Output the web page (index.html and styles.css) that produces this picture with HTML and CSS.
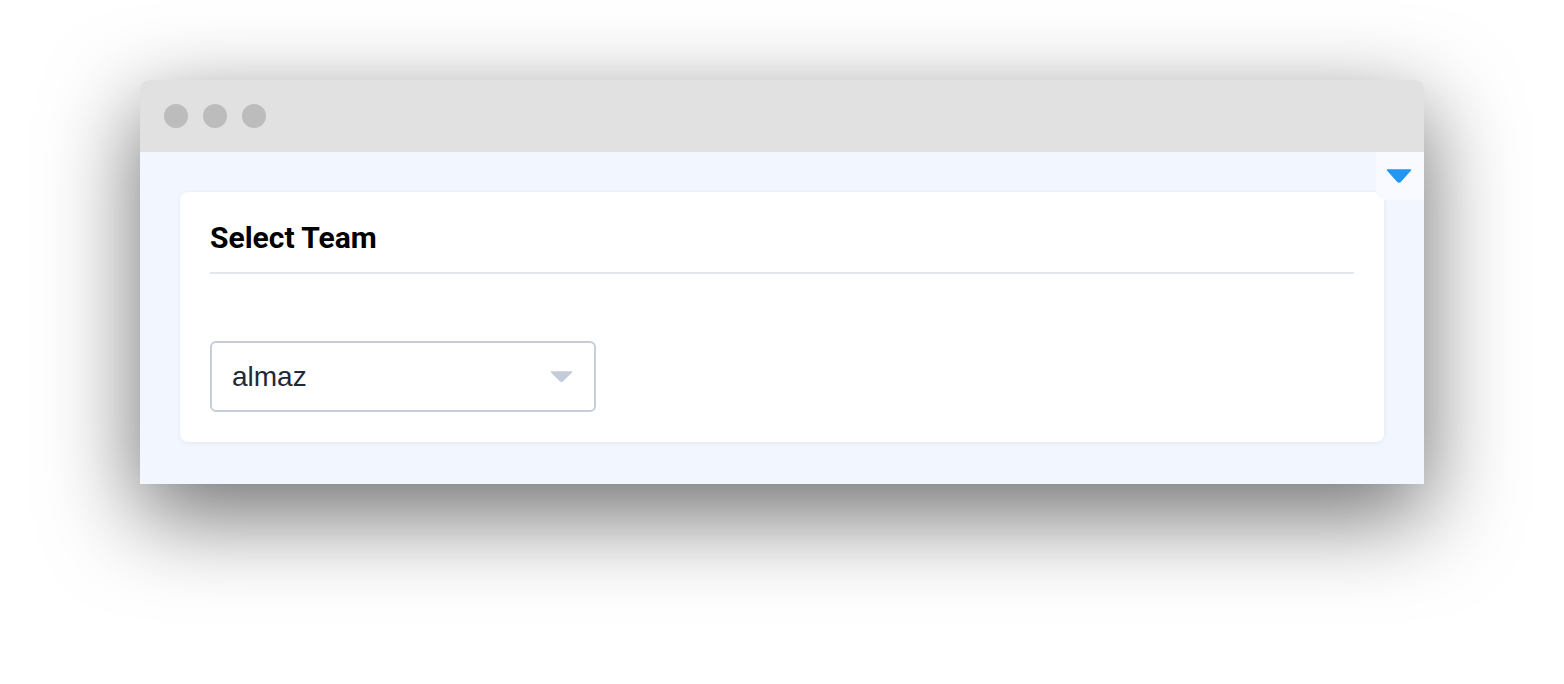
FILE: index.html
```html
<!DOCTYPE html>
<html lang="en">
<head>
    <meta charset="UTF-8">
    <meta name="viewport" content="width=device-width, initial-scale=1.0">
    <title>Select Team</title>
    <link rel="stylesheet" href="styles.css">
</head>
<body>
    <div class="window">
        <div class="titlebar">
            <span class="dot"></span>
            <span class="dot"></span>
            <span class="dot"></span>
        </div>
        <div class="content">
            <div class="corner-toggle">
                <svg width="26" height="14" viewBox="0 0 26 14">
                    <path d="M1.5 1 L24.5 1 L14.2 12.4 Q13 13.6 11.8 12.4 Z" fill="#2196f3" stroke="#2196f3" stroke-width="1.5" stroke-linejoin="round"/>
                </svg>
            </div>
            <div class="card">
                <h2>Select Team</h2>
                <div class="select-box">
                    <span class="select-value">almaz</span>
                    <svg class="select-arrow" width="23" height="11" viewBox="0 0 23 11">
                        <path d="M1.5 1 L21.5 1 L12.4 10 Q11.5 10.8 10.6 10 Z" fill="#c3ccd8" stroke="#c3ccd8" stroke-width="1.5" stroke-linejoin="round"/>
                    </svg>
                </div>
            </div>
        </div>
    </div>
</body>
</html>
```

FILE: styles.css
```css
html {
    background-color: #ffffff;
}

body {
    margin: 0;
    padding: 80px 140px 0;
    min-height: 684px;
    box-sizing: border-box;
    background-color: #ffffff;
    font-family: Roboto, "Liberation Sans", sans-serif;
}

.window {
    width: 1284px;
    border-radius: 8px 8px 0 0;
    box-shadow: 0 30px 90px 2px rgba(0, 0, 0, 0.56);
}

.titlebar {
    height: 72px;
    background-color: #e1e1e1;
    border-radius: 8px 8px 0 0;
    display: flex;
    align-items: center;
    padding-left: 24px;
    gap: 15px;
}

.dot {
    width: 24px;
    height: 24px;
    border-radius: 50%;
    background-color: #bcbcbc;
}

.content {
    position: relative;
    background-color: #f2f6fe;
    padding: 40px 40px 42px;
}

.corner-toggle {
    position: absolute;
    top: 0;
    right: 0;
    width: 48px;
    height: 48px;
    background-color: #f8faff;
    border-radius: 0 0 0 10px;
    display: flex;
    align-items: center;
    justify-content: center;
    padding-right: 2px;
    box-sizing: border-box;
}

.card {
    background-color: #fff;
    border-radius: 8px;
    box-shadow: 0 1px 4px rgba(30, 50, 90, 0.08);
    padding: 30px 30px 30px;
}

.card h2 {
    margin: 0 0 67px;
    font-size: 30px;
    line-height: 32px;
    font-weight: 700;
    color: #000;
    padding-bottom: 18px;
    border-bottom: 2px solid #e3e6eb;
}

.select-box {
    width: 386px;
    height: 71px;
    box-sizing: border-box;
    border: 2px solid #c5cdd8;
    border-radius: 6px;
    display: flex;
    align-items: center;
    justify-content: space-between;
    padding: 0 21px 0 20px;
}

.select-value {
    font-family: "Liberation Sans", Arial, sans-serif;
    font-size: 28px;
    color: #1f2937;
}
```
